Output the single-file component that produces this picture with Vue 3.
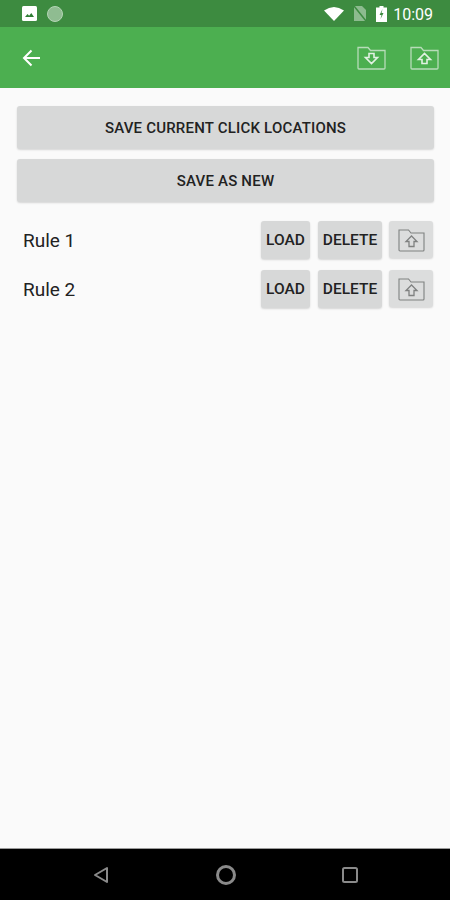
<template>
  <div class="screen">
    <div class="status">
      <svg class="pic" width="15" height="15" viewBox="0 0 15 15">
        <rect width="15" height="15" rx="1.5" fill="#fff" />
        <path d="M3 11l2.5-3 1.6 1.8L9.3 7l2.7 4z" fill="#2f7d34" />
      </svg>
      <span class="dot"></span>
      <span class="grow"></span>
      <svg class="wifi" width="20" height="14" viewBox="0 0 20 14">
        <path d="M0 3.6Q10-3.4 20 3.6L10 14z" fill="#fff" />
      </svg>
      <svg class="nosim" width="14" height="15" viewBox="0 0 14 15">
        <path d="M1 0h8l4 4v11H1z" fill="#8dbb8f" />
        <path d="M1 0l12 15" stroke="#3d8b40" stroke-width="1.5" />
      </svg>
      <svg class="batt" width="11" height="16" viewBox="0 0 11 16">
        <path d="M3.5 0h4v1.500H11V16H0V1.500h3.500z" fill="#fff" />
        <path d="M6.500 3L3.500 9h2L4.500 13l3-6h-2z" fill="#3d8b40" />
      </svg>
      <span class="time">10:09</span>
    </div>

    <div class="toolbar">
      <svg width="18" height="18" viewBox="0 0 18 18" fill="none" stroke="#fff" stroke-width="2">
        <path d="M18 9H2M9.500 1.500L2 9l7.500 7.500" />
      </svg>
      <span class="grow"></span>
      <svg class="bar-icon" width="29" height="24" viewBox="0 0 29 24" fill="none" stroke="#b7dcb9" stroke-width="1.300">
        <path d="M1 21.500V1.500h10l2.500 3H28v17.500a1 1 0 0 1-1 1H2a1 1 0 0 1-1-1z" />
        <path d="M12 7.500h5v4h3.500L14.500 17.500l-6-6H12z" stroke="#e2f1e3" stroke-width="1.600" />
      </svg>
      <svg class="bar-icon" width="29" height="24" viewBox="0 0 29 24" fill="none" stroke="#b7dcb9" stroke-width="1.300">
        <path d="M1 21.500V1.500h10l2.500 3H28v17.500a1 1 0 0 1-1 1H2a1 1 0 0 1-1-1z" />
        <path d="M12 17.500v-4H8.500l6-6 6 6H17v4z" stroke="#e2f1e3" stroke-width="1.600" />
      </svg>
    </div>

    <div class="content">
      <button class="wide">SAVE CURRENT CLICK LOCATIONS</button>
      <button class="wide">SAVE AS NEW</button>

      <div class="rules">
        <div v-for="rule in rules" :key="rule" class="rule">
          <span class="name">{{ rule }}</span>
          <button class="small load">LOAD</button>
          <button class="small del">DELETE</button>
          <button class="small export">
            <svg width="27" height="24" viewBox="0 0 27 24" fill="none" stroke="#7f8180" stroke-width="1.100">
              <path d="M1 22V2h9.500l2.500 3h13v17a1 1 0 0 1-1 1H2a1 1 0 0 1-1-1z" />
              <path d="M11 18.500v-5H8l5.500-5.500 5.500 5.500h-3v5z" stroke-width="1.300" />
            </svg>
          </button>
        </div>
      </div>
    </div>

    <div class="navbar">
      <svg width="16" height="18" viewBox="0 0 16 18" fill="none" stroke="#8a8a8a" stroke-width="2" stroke-linejoin="round">
        <path d="M14 2v14L2 9z" />
      </svg>
      <svg width="22" height="22" viewBox="0 0 22 22" fill="none" stroke="#8a8a8a" stroke-width="3">
        <circle cx="11" cy="11" r="8.500" />
      </svg>
      <svg width="16" height="16" viewBox="0 0 16 16" fill="none" stroke="#8a8a8a" stroke-width="2">
        <rect x="1" y="1" width="14" height="14" rx="1.500" />
      </svg>
    </div>
  </div>
</template>

<script setup>
const rules = ["Rule 1", "Rule 2"];
</script>

<style>
body {
  margin: 0;
}
</style>

<style scoped>
.screen {
  display: flex;
  flex-direction: column;
  width: 450px;
  height: 900px;
  background: #fafafa;
  font-family: Roboto, "Liberation Sans", sans-serif;
  overflow: hidden;
}

.grow {
  flex: 1;
}

.status {
  display: flex;
  align-items: center;
  height: 27px;
  padding: 0 17px 0 22px;
  background: #3d8b40;
  box-sizing: border-box;
}

.dot {
  width: 16px;
  height: 16px;
  margin-left: 10px;
  border-radius: 50%;
  background: #8fbc91;
  border: 1px solid #b5d5b6;
  box-sizing: border-box;
}

.nosim {
  margin-left: 9px;
}

.batt {
  margin-left: 9px;
}

.time {
  margin-left: 6px;
  padding-top: 1px;
  color: #fff;
  font-size: 16px;
}

.toolbar {
  display: flex;
  align-items: center;
  height: 61px;
  padding: 0 11px 0 22px;
  background: #4caf50;
  box-sizing: border-box;
}

.bar-icon {
  margin-left: 24px;
}

.content {
  flex: 1;
  padding: 18px 16px 0 17px;
}

button {
  display: block;
  border: 0;
  padding: 0;
  background: #d7d8d8;
  color: #222;
  font-family: inherit;
  font-weight: 500;
  box-shadow: 0 1px 2px rgba(0, 0, 0, 0.15);
}

.wide {
  width: 100%;
  height: 43px;
  margin-bottom: 10px;
  border-radius: 3px;
  font-size: 15px;
  letter-spacing: 0.2px;
}

.rules {
  margin-top: 18px;
  padding-right: 1px;
}

.rule {
  display: flex;
  align-items: center;
  height: 39px;
  margin-bottom: 10px;
}

.name {
  flex: 1;
  padding: 2px 0 0 6px;
  font-size: 19px;
  color: #222;
}

.small {
  height: 38px;
  border-radius: 3px;
  font-size: 15.500px;
}

.load {
  width: 49px;
}

.del {
  width: 64px;
  margin-left: 8px;
}

.export {
  display: flex;
  align-items: center;
  justify-content: center;
  width: 44px;
  height: 37px;
  margin-left: 7px;
  background: #dcdddd;
}

.navbar {
  display: flex;
  align-items: center;
  justify-content: space-between;
  height: 52px;
  padding: 0 92px 0 93px;
  background: #000;
  border-top: 1px solid #9a9a9a;
  box-sizing: border-box;
}
</style>
